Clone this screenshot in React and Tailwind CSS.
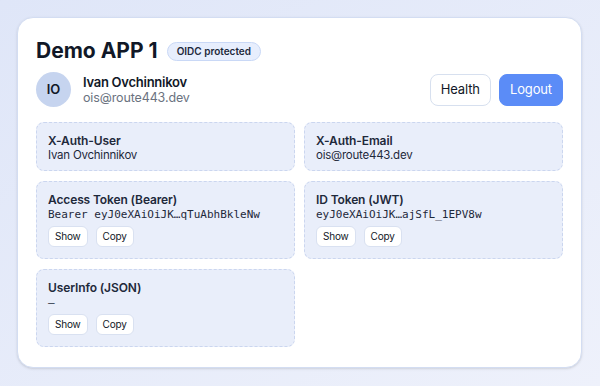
import React from "react";

// Small white button used under token fields
function SmallButton({ children }) {
  return (
    <button className="h-[21px] px-[6px] rounded-md bg-white border border-[#d9e1f1] text-[10px] tracking-[-0.02em] text-[#111827]">
      {children}
    </button>
  );
}

// Dashed info box with a label and a value
function InfoBox({ label, value, mono, actions }) {
  return (
    <div className="rounded-lg border border-dashed border-[#cbd6ef] bg-[#e9eefa] px-[11px] pt-[11px] pb-[11px]">
      <div className="text-[12px] font-semibold leading-[14px] tracking-[-0.01em] text-[#1e293b]">{label}</div>
      {mono ? (
        <div className="text-[11px] leading-[16px] text-[#1e293b] font-['DejaVu_Sans_Mono',monospace]">{value}</div>
      ) : (
        <div className="text-[11.5px] leading-[14px] tracking-[-0.02em] text-[#1e293b] -mb-[3px]">{value}</div>
      )}
      {actions && (
        <div className="flex gap-2 mt-[3px]">
          <SmallButton>Show</SmallButton>
          <SmallButton>Copy</SmallButton>
        </div>
      )}
    </div>
  );
}

export default function App() {
  return (
    <div className="min-h-[386px] w-[600px] bg-gradient-to-br from-[#dfe6f8] to-[#eef1fb] pt-[17px] pl-[17px] font-['Inter',sans-serif]">
      <div className="w-[565px] h-[351px] rounded-2xl bg-white border border-[#d3ddf2] shadow-sm px-[18px] pt-[19px]">
        {/* Cabecera */}
        <div className="flex items-center gap-[9px]">
          <h1 className="text-[21px] font-bold leading-[28px] text-[#111827]">Demo APP 1</h1>
          <span className="h-[19px] px-[9px] flex items-center rounded-full bg-[#e7eefd] border border-[#c9d8f6] text-[10px] font-semibold text-[#1e293b]">
            OIDC protected
          </span>
        </div>

        {/* Usuario */}
        <div className="flex items-center justify-between mt-[7px]">
          <div className="flex items-center gap-[12px]">
            <div className="w-[35px] h-[35px] rounded-full bg-[#c6d4ef] flex items-center justify-center text-[13px] font-semibold text-[#111827]">
              IO
            </div>
            <div>
              <div className="text-[13px] font-semibold leading-[16px] tracking-[-0.02em] text-[#111827]">Ivan Ovchinnikov</div>
              <div className="text-[12.5px] leading-[15px] tracking-[-0.01em] text-[#6b7280]">ois@route443.dev</div>
            </div>
          </div>
          <div className="flex gap-2">
            <button className="h-[32px] px-[10px] rounded-lg bg-white border border-[#d7e0ef] text-[13px] tracking-[-0.01em] text-[#111827]">
              Health
            </button>
            <button className="h-[32px] px-[10px] rounded-lg bg-[#5b8cf7] border border-[#5b8cf7] text-[13px] tracking-[-0.01em] text-white">
              Logout
            </button>
          </div>
        </div>

        {/* Campos */}
        <div className="grid grid-cols-2 gap-x-[9px] gap-y-[10px] mt-[15px] items-start">
          <InfoBox label="X-Auth-User" value="Ivan Ovchinnikov" />
          <InfoBox label="X-Auth-Email" value="ois@route443.dev" />
          <InfoBox label="Access Token (Bearer)" value="Bearer eyJ0eXAiOiJK…qTuAbhBkleNw" mono actions />
          <InfoBox label="ID Token (JWT)" value="eyJ0eXAiOiJK…ajSfL_1EPV8w" mono actions />
          <InfoBox label="UserInfo (JSON)" value="—" mono actions />
        </div>
      </div>
    </div>
  );
}
